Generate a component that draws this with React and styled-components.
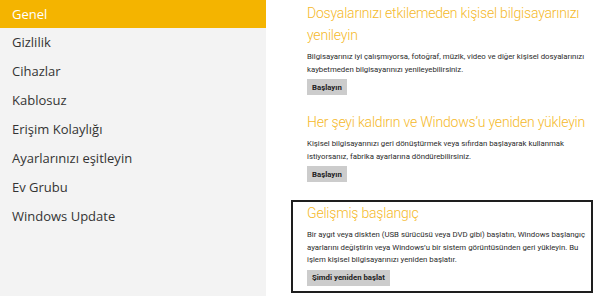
import styled, { createGlobalStyle } from "styled-components";

const GlobalStyle = createGlobalStyle`
  html, body {
    margin: 0;
    padding: 0;
    background: #ffffff;
  }
  body {
    font-family: "Open Sans", "Noto Sans", sans-serif;
  }
`;

const Page = styled.div`
  display: flex;
  width: 600px;
  height: 296px;
  overflow: hidden;
  background: #ffffff;
`;

const Sidebar = styled.nav`
  width: 266px;
  flex-shrink: 0;
  background: #f3f3f3;
  display: flex;
  flex-direction: column;
`;

const NavItem = styled.div`
  height: ${(p) => (p.$active ? "28px" : "29px")};
  line-height: ${(p) => (p.$active ? "28px" : "29px")};
  padding-left: 12px;
  font-size: 13px;
  color: ${(p) => (p.$active ? "#ffffff" : "#333333")};
  background: ${(p) => (p.$active ? "#f4b400" : "transparent")};
  white-space: nowrap;
`;

const Content = styled.main`
  display: flex;
  flex-direction: column;
  padding-left: 25px;
  width: 302px;
`;

const Section = styled.section`
  padding: ${(p) => (p.$boxed ? "0 2px 5px 14px" : "0 4px 0 16px")};
  margin-top: ${(p) => p.$top || "0px"};
  border: ${(p) => (p.$boxed ? "2px solid #1e1e1e" : "none")};
`;

const Heading = styled.h2`
  margin: 0;
  font-family: "Roboto", "Open Sans", sans-serif;
  font-size: 14px;
  font-weight: 300;
  letter-spacing: -0.2px;
  line-height: 22px;
  color: #f5b92a;
  white-space: nowrap;
`;

const Body = styled.p`
  margin: 5px 0 0;
  font-family: "Roboto", "Open Sans", sans-serif;
  font-size: 7.8px;
  line-height: 12.5px;
  color: #2b2b2b;
  white-space: nowrap;
`;

const Button = styled.button`
  display: block;
  margin-top: 3px;
  height: 16px;
  padding: 0 5px;
  border: none;
  background: #cccccc;
  font-family: "Roboto", "Open Sans", sans-serif;
  font-size: 7.8px;
  font-weight: 700;
  color: #222222;
`;

const navItems = [
  "Genel",
  "Gizlilik",
  "Cihazlar",
  "Kablosuz",
  "Erişim Kolaylığı",
  "Ayarlarınızı eşitleyin",
  "Ev Grubu",
  "Windows Update",
];

export default function App() {
  return (
    <>
      <GlobalStyle />
      <Page>
        <Sidebar>
          {navItems.map((item, i) => (
            <NavItem key={item} $active={i === 0}>
              {item}
            </NavItem>
          ))}
        </Sidebar>
        <Content>
          <Section $top="2px">
            <Heading>
              Dosyalarınızı etkilemeden kişisel bilgisayarınızı
              <br />
              yenileyin
            </Heading>
            <Body>
              Bilgisayarınız iyi çalışmıyorsa, fotoğraf, müzik, video ve diğer kişisel dosyalarınızı
              <br />
              kaybetmeden bilgisayarınızı yenileyebilirsiniz.
            </Body>
            <Button>Başlayın</Button>
          </Section>
          <Section $top="16px">
            <Heading>Her şeyi kaldırın ve Windows’u yeniden yükleyin</Heading>
            <Body>
              Kişisel bilgisayarınızı geri dönüştürmek veya sıfırdan başlayarak kullanmak
              <br />
              istiyorsanız, fabrika ayarlarına döndürebilirsiniz.
            </Body>
            <Button>Başlayın</Button>
          </Section>
          <Section $boxed $top="18px">
            <Heading>Gelişmiş başlangıç</Heading>
            <Body>
              Bir aygıt veya diskten (USB sürücüsü veya DVD gibi) başlatın, Windows başlangıç
              <br />
              ayarlarını değiştirin veya Windows’u bir sistem görüntüsünden geri yükleyin. Bu
              <br />
              işlem kişisel bilgisayarınızı yeniden başlatır.
            </Body>
            <Button>Şimdi yeniden başlat</Button>
          </Section>
        </Content>
      </Page>
    </>
  );
}
